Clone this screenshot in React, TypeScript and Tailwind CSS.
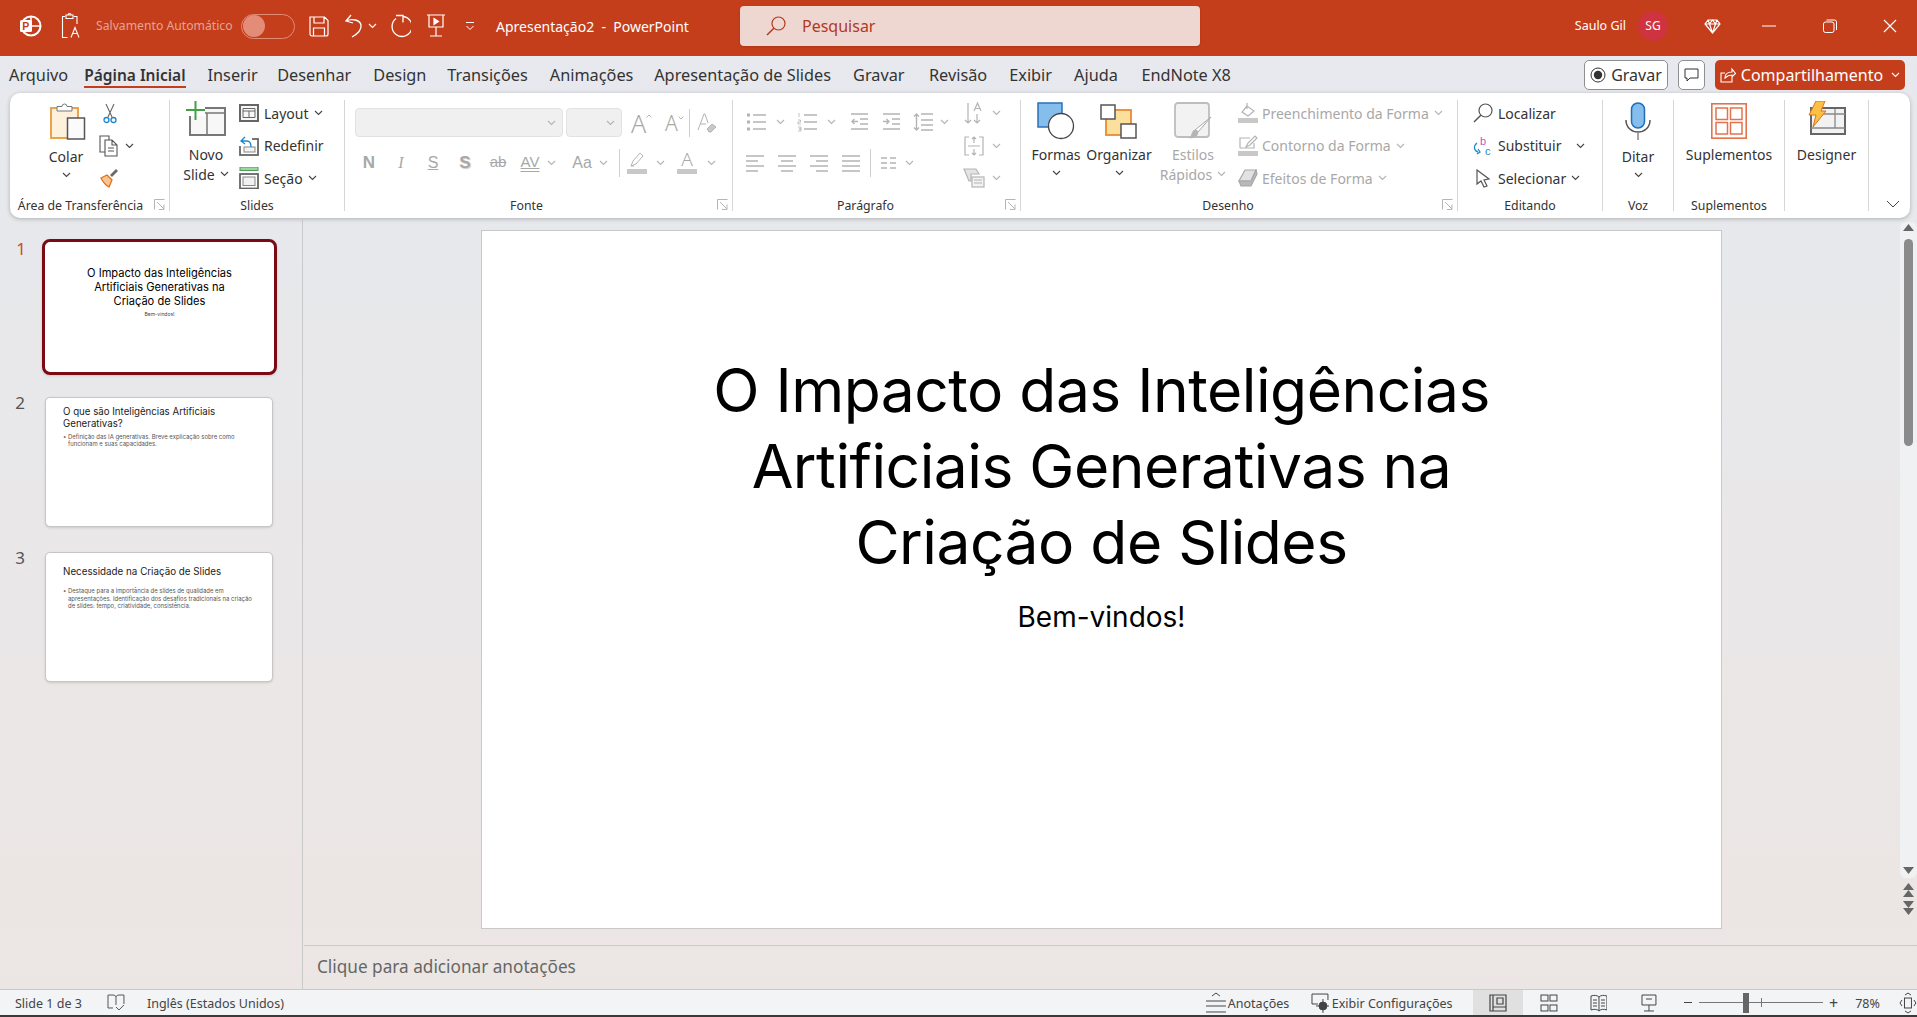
import { type ReactNode } from "react";

const ui = "font-['Noto_Sans','Open_Sans',sans-serif]";
const OFF = "#b4b4b4";

function Chev({ c = "#444", cls = "" }: { c?: string; cls?: string }) {
  return (
    <svg width="9" height="6" viewBox="0 0 9 6" className={`shrink-0 ${cls}`}>
      <path d="M1 1l3.5 3.5L8 1" fill="none" stroke={c} strokeWidth="1.1" />
    </svg>
  );
}

function Launcher() {
  return (
    <svg width="11" height="11" viewBox="0 0 11 11" className="absolute right-[4px] top-[1px]">
      <path d="M.5 10.5V.5h10M3 3l7 7M10 5.5v5H5" fill="none" stroke="#b5b5b5" />
    </svg>
  );
}

function Group({ w, label, launcher, children, labelCls = "" }: { w: string; label?: string; launcher?: boolean; children: ReactNode; labelCls?: string }) {
  return (
    <div className={`${w} shrink-0 border-r border-[#d6d6d6] flex flex-col relative`}>
      <div className="flex-1 flex -mt-[3px] min-h-0">{children}</div>
      <div className={`h-[14px] -mb-[2px] relative flex items-center justify-center text-[12.3px] leading-none text-[#333] ${labelCls}`}>
        {label}
      </div>
      {launcher && <div className="absolute bottom-0 right-0 w-[20px] h-[13px]"><Launcher /></div>}
    </div>
  );
}

function Big({ w, icon, lines, chev = true, off = false, cls = "", drop = false }: { w: string; icon: ReactNode; lines: string[]; chev?: boolean; off?: boolean; cls?: string; drop?: boolean }) {
  const color = off ? "text-[#a8a8a8]" : "text-[#333]";
  const single = lines.length === 1;
  return (
    <div className={`${w} ${cls} shrink-0 flex flex-col items-center pt-[3px]`}>
      <div className={`h-[42px] flex items-center justify-center ${drop ? "mb-[4px]" : "mb-[2px]"}`}>{icon}</div>
      {lines.map((l, i) => (
        <div key={l} className={`h-[20px] flex items-center gap-[5px] text-[14px] whitespace-nowrap ${color}`}>
          {l}
          {chev && !single && i === lines.length - 1 && <Chev c={off ? OFF : "#444"} />}
        </div>
      ))}
      {chev && single && <div className="h-[16px] mt-[1px] flex items-center"><Chev /></div>}
    </div>
  );
}

function Small({ icon, label, chev = false, off = false, gap = "gap-[5px]", chevCls = "" }: { icon: ReactNode; label: string; chev?: boolean; off?: boolean; gap?: string; chevCls?: string }) {
  return (
    <div className={`h-8 flex items-center ${gap} text-[14px] whitespace-nowrap ${off ? "text-[#a8a8a8]" : "text-[#333]"}`}>
      <div className="w-[20px] h-[20px] flex items-center justify-center shrink-0">{icon}</div>
      <span>{label}</span>
      {chev && <Chev c={off ? OFF : "#444"} cls={chevCls} />}
    </div>
  );
}

function Rows({ cls = "", children }: { cls?: string; children: ReactNode }) {
  return <div className={`flex flex-col gap-[0.5px] ${cls}`}>{children}</div>;
}

/* icons */
const PptLogo = () => (
  <svg width="24" height="24" viewBox="0 0 24 24" fill="none">
    <circle cx="13" cy="12" r="9.5" stroke="#fff" strokeWidth="2" />
    <path d="M13 3v9h9" stroke="#fff" strokeWidth="1.5" />
    <rect x="2" y="6" width="12" height="12" rx="1.5" fill="#fff" />
    <text x="4.2" y="15.8" fontSize="10.5" fontWeight="700" fill="#c43e1c" fontFamily="Liberation Sans, sans-serif">P</text>
  </svg>
);
const AccessIcon = () => (
  <svg width="20" height="28" viewBox="0 0 20 28" fill="none" stroke="#fff" strokeWidth="1.1">
    <path d="M4 4.5H1.5v21h5M13 4.5h3V12M5 3h7v3.500H5zM7 3a1.500 1.500 0 0 1 3 0" />
    <path d="M10 25.500l4-10 4 10M11.500 21.500h5" />
  </svg>
);
const SaveIcon = () => (
  <svg width="20" height="21" viewBox="0 0 20 21" fill="none" stroke="#fff" strokeWidth="1.2">
    <path d="M1 1h14.500L19 4.500V18a2 2 0 0 1-2 2H3a2 2 0 0 1-2-2zM5 1v6h10V1M4.500 20v-8h11v8" />
  </svg>
);
const UndoIcon = () => (
  <svg width="20" height="24" viewBox="0 0 20 24" fill="none" stroke="#fff" strokeWidth="1.3">
    <path d="M7 1L2 7l7 2M2 7c6-3 14-1 15 4 .6 4-2 8-9 12" />
  </svg>
);
const RedoIcon = () => (
  <svg width="21" height="24" viewBox="0 0 21 24" fill="none" stroke="#fff" strokeWidth="1.3">
    <path d="M6 1.500h7v7" />
    <path d="M13 2.500A10 10 0 1 1 6 4.500" />
  </svg>
);
const PresentIcon = () => (
  <svg width="20" height="24" viewBox="0 0 20 24" fill="none" stroke="#fff" strokeWidth="1.2">
    <path d="M1 1h18M3 1v12h14V1M10 13v9M4 22h12" />
    <path d="M8 4.500l4.500 3-4.500 3z" fill="#fff" />
  </svg>
);
const Customize = () => (
  <svg width="10" height="9" viewBox="0 0 10 9" fill="none" stroke="#fff">
    <path d="M1 .5h8M1.500 4L5 7.500 8.500 4" />
  </svg>
);
const SearchGlass = ({ c = "#b03a1f", s = 20 }: { c?: string; s?: number }) => (
  <svg width={s} height={s} viewBox="0 0 20 20" fill="none" stroke={c} strokeWidth="1.2">
    <circle cx="12.500" cy="7.500" r="6.500" />
    <path d="M7.800 12.200L1 19" strokeWidth="1.500" />
  </svg>
);
const Diamond = () => (
  <svg width="17" height="15" viewBox="0 0 17 15" fill="none" stroke="#fff" strokeWidth="1.2">
    <path d="M4 1h9l3 4-7.500 9L1 5zM1 5h15M5.500 5l3 9 3-9M4 1l1.500 4 3-4 3 4L13 1" />
  </svg>
);
const RecIcon = () => (
  <svg width="16" height="16" viewBox="0 0 16 16">
    <circle cx="8" cy="8" r="7" fill="none" stroke="#333" />
    <circle cx="8" cy="8" r="4.200" fill="#333" />
  </svg>
);
const CommentIcon = () => (
  <svg width="15" height="14" viewBox="0 0 15 14" fill="none" stroke="#333">
    <path d="M1 1h13v9H6l-3 3v-3H1z" />
  </svg>
);
const ShareIcon = () => (
  <svg width="16" height="16" viewBox="0 0 16 16" fill="none" stroke="#fff" strokeWidth="1.100">
    <path d="M5 6H1v9h11v-5M5 11c0-4 3-6 7-6V2l3.500 4.500L12 10V8c-3 0-5 1-7 3z" />
  </svg>
);
const PasteIcon = () => (
  <svg width="36" height="37" viewBox="0 0 36 37">
    <rect x="1" y="5" width="27" height="30" fill="#fdf1dc" stroke="#e89a3c" strokeWidth="1.800" />
    <path d="M7 7V3.500h5a2.500 2.500 0 0 1 5 0h5V8H7z" fill="#fff" stroke="#777" />
    <rect x="17.500" y="15" width="17" height="21" fill="#fbfbfb" stroke="#555" strokeWidth="1.500" />
  </svg>
);
const ScissorsIcon = () => (
  <svg width="14" height="21" viewBox="0 0 14 21" fill="none">
    <path d="M3 1l6 13M11 1L5 14" stroke="#666" strokeWidth="1.100" />
    <circle cx="3.500" cy="17" r="2.500" stroke="#1a86d0" strokeWidth="1.300" />
    <circle cx="10.500" cy="17" r="2.500" stroke="#1a86d0" strokeWidth="1.300" />
  </svg>
);
const CopyIcon = () => (
  <svg width="20" height="22" viewBox="0 0 20 22" fill="#fff" stroke="#555" strokeWidth="1.100">
    <path d="M1 1h9v16H1z" />
    <path d="M6 5h7l5 5v11H6zM13 5v5h5M9 13h6M9 16h6" />
  </svg>
);
const BrushIcon = () => (
  <svg width="20" height="20" viewBox="0 0 20 20">
    <path d="M2 10l6-3 5 5-3 7c-2-1-6-5-8-9z" fill="#f9c48e" stroke="#e0701c" strokeWidth="1.300" />
    <path d="M11 7l6-6 2 2-6 6z" fill="#6a6a6a" />
  </svg>
);
const NewSlideIcon = () => (
  <svg width="40" height="36" viewBox="0 0 40 36" fill="none">
    <rect x="4" y="7" width="35" height="27" fill="#f7f7f7" stroke="#777" strokeWidth="2" />
    <path d="M4 12h34M21 12v21" stroke="#777" strokeWidth="1.500" />
    <rect x="0" y="2" width="19" height="13" fill="#fff" />
    <path d="M9.500 0v19M0 9h19" stroke="#43a047" strokeWidth="2" />
  </svg>
);
const LayoutIcon = () => (
  <svg width="20" height="18" viewBox="0 0 20 18" fill="none" stroke="#666">
    <rect x="1" y="1" width="18" height="16" strokeWidth="2" fill="#f7f7f7" />
    <path d="M4 4.500h12v9H4zM4 7h12M10 7v6.500" />
  </svg>
);
const ResetIcon = () => (
  <svg width="20" height="20" viewBox="0 0 20 20" fill="none">
    <rect x="1" y="3" width="18" height="16" stroke="#666" strokeWidth="1.800" />
    <rect x="5" y="11" width="11" height="5" fill="#f2f2f2" stroke="#888" />
    <rect x="0" y="0" width="13" height="10" fill="#fff" />
    <path d="M6 1L2 5l4 3M2 5h6c3 0 4 2 4 6" stroke="#1a86d0" strokeWidth="1.300" />
  </svg>
);
const SectionIcon = () => (
  <svg width="20" height="22" viewBox="0 0 20 22" fill="none">
    <rect x="1" y="0" width="18" height="3.500" fill="#9fd5a3" stroke="#4aa05a" />
    <rect x="1" y="7" width="18" height="14.500" stroke="#666" strokeWidth="1.800" />
    <rect x="4" y="10" width="12" height="8.500" fill="#f2f2f2" stroke="#888" />
  </svg>
);
const BulletsIcon = () => (
  <svg width="21" height="18" viewBox="0 0 21 18" fill="none" stroke={OFF}>
    <path d="M7 2h13M7 9h13M7 16h13" strokeWidth="1.300" />
    <path d="M1 2h3M1 9h3M1 16h3" strokeWidth="3" />
  </svg>
);
const NumbersIcon = () => (
  <svg width="21" height="20" viewBox="0 0 21 20" fill="none" stroke={OFF}>
    <path d="M7 3h13M7 10h13M7 17h13" strokeWidth="1.300" />
    <path d="M2 1v4M1 8h2.500v2H1v2h3M1 15h3v2H2h2v2H1" strokeWidth=".8" />
  </svg>
);
const IndentIcon = ({ inc = false }: { inc?: boolean }) => (
  <svg width="19" height="18" viewBox="0 0 19 18" fill="none" stroke={OFF} strokeWidth="1.400">
    <path d="M1 1h17M10 6h8M10 11h8M1 16h17" />
    <path d={inc ? "M1 8.500h6M4.500 6l2.500 2.500L4.500 11" : "M8 8.500H2M4.500 6L2 8.500 4.500 11"} />
  </svg>
);
const SpacingIcon = () => (
  <svg width="21" height="20" viewBox="0 0 21 20" fill="none" stroke={OFF} strokeWidth="1.400">
    <path d="M8 2h12M8 8h12M8 13h12M8 18h12M3.500 2v16M1 4.500L3.500 2 6 4.500M1 15.500L3.500 18 6 15.500" />
  </svg>
);
const AlignIcon = ({ m }: { m: "l" | "c" | "r" | "j" }) => {
  const d = {
    l: "M1 1h18M1 6h12M1 11h18M1 16h12",
    c: "M1 1h18M4 6h12M1 11h18M4 16h12",
    r: "M1 1h18M7 6h12M1 11h18M7 16h12",
    j: "M1 1h18M1 6h18M1 11h18M1 16h18",
  }[m];
  return (
    <svg width="20" height="17" viewBox="0 0 20 17" fill="none" stroke={OFF} strokeWidth="1.400">
      <path d={d} />
    </svg>
  );
};
const ColumnsIcon = () => (
  <svg width="17" height="12" viewBox="0 0 17 12" fill="none" stroke={OFF} strokeWidth="1.300">
    <path d="M1 1h6M1 6h6M1 11h6M10 1h6M10 6h6M10 11h6" />
  </svg>
);
const TextDirIcon = () => (
  <svg width="20" height="24" viewBox="0 0 20 24" fill="none" stroke={OFF} strokeWidth="1.200">
    <path d="M4 2v20M1 19l3 3 3-3M13 13v9M10 19l3 3 3-3M10 10l3.500-8L17 10M11 7.500h5" />
  </svg>
);
const AlignBoxIcon = () => (
  <svg width="20" height="22" viewBox="0 0 20 22" fill="none" stroke={OFF} strokeWidth="1.200">
    <path d="M5 2H1v18h4M15 2h4v18h-4M4 11h12M10 2v6M8 4l2-2 2 2M10 14v6M8 18l2 2 2-2" />
  </svg>
);
const SmartIcon = () => (
  <svg width="22" height="20" viewBox="0 0 22 20" fill="none" stroke={OFF} strokeWidth="1.200">
    <path d="M1 1h12l3 5H8v7H6z" fill="#e4e4e4" />
    <rect x="9" y="9" width="12" height="10" fill="#f2f2f2" />
    <path d="M11 12h8M11 15h8" />
  </svg>
);
const FillIcon = () => (
  <svg width="20" height="22" viewBox="0 0 20 22" fill="none" stroke={OFF} strokeWidth="1.200">
    <path d="M9 4l-5 6 6 4 6-5zM9 1v6" />
    <rect x="0" y="16" width="20" height="5" fill="#c8c8c8" stroke="none" />
  </svg>
);
const LineIcon = () => (
  <svg width="20" height="22" viewBox="0 0 20 22" fill="none" stroke={OFF} strokeWidth="1.200">
    <path d="M2 13V3h10M16 8v5H2M8 12l2-4 7-7 2 2-7 7z" />
    <rect x="0" y="16" width="20" height="5" fill="#c8c8c8" stroke="none" />
  </svg>
);
const EffectIcon = () => (
  <svg width="20" height="18" viewBox="0 0 20 18" stroke="#a8a8a8" strokeWidth="1.200">
    <path d="M7 1h11L13 12H1z" fill="#e2e2e2" />
    <path d="M1 12l2 5h10l6-12-1-4-5 11z" fill="#b8b8b8" />
  </svg>
);
const ShapesIcon = () => (
  <svg width="38" height="38" viewBox="0 0 38 38">
    <rect x="1" y="1" width="24" height="24" fill="#85bdec" stroke="#2a72b8" strokeWidth="1.500" />
    <circle cx="24" cy="24" r="12.500" fill="#fff" stroke="#444" strokeWidth="1.300" />
  </svg>
);
const ArrangeIcon = () => (
  <svg width="38" height="35" viewBox="0 0 38 35">
    <rect x="6" y="6" width="25" height="25" fill="#fbdf9c" stroke="#ea8a2f" strokeWidth="1.800" />
    <rect x="1" y="1" width="14" height="14" fill="#fff" stroke="#555" strokeWidth="1.500" />
    <rect x="21" y="20" width="15" height="14" fill="#fff" stroke="#555" strokeWidth="1.500" />
  </svg>
);
const StylesIcon = () => (
  <svg width="38" height="38" viewBox="0 0 38 38">
    <rect x="1" y="1" width="34" height="34" rx="3" fill="#f2f2f2" stroke="#bdbdbd" strokeWidth="1.800" />
    <path d="M37 15L24 30l-3-2z" fill="#fff" stroke="#a8a8a8" />
    <path d="M20 28c3-1 5 1 4 4s-6 5-9 4c3-2 2-6 5-8z" fill="#b5b5b5" />
  </svg>
);
const ReplaceIcon = () => (
  <svg width="20" height="20" viewBox="0 0 20 20" fill="none">
    <path d="M4 7C0 10 1 15 5 16M5 13l2 3-3 2" stroke="#1a8ad0" strokeWidth="1.300" />
    <text x="7" y="9" fontSize="11" fill="#b45dbf" fontFamily="Liberation Sans, sans-serif">b</text>
    <text x="12" y="19" fontSize="11" fill="#1a8ad0" fontFamily="Liberation Sans, sans-serif">c</text>
  </svg>
);
const CursorIcon = () => (
  <svg width="16" height="19" viewBox="0 0 16 19" fill="#fff" stroke="#555" strokeWidth="1.200">
    <path d="M2 1v14l4-3 3 6 3-1-3-6 5-1z" />
  </svg>
);
const MicIcon = () => (
  <svg width="26" height="38" viewBox="0 0 26 38" fill="none">
    <rect x="6.500" y="1" width="13" height="25" rx="6.500" fill="#85bdec" stroke="#1f6fb8" strokeWidth="1.500" />
    <path d="M1 18c0 16 24 16 24 0" stroke="#555" strokeWidth="1.500" />
    <path d="M13 31v7" stroke="#888" strokeWidth="1.500" />
  </svg>
);
const AddinsIcon = () => (
  <svg width="36" height="36" viewBox="0 0 36 36" fill="none" stroke="#e2734d" strokeWidth="1.500">
    <rect x=".8" y=".8" width="34.400" height="34.400" strokeWidth="1.600" />
    <rect x="5" y="5" width="11.500" height="11.500" />
    <rect x="19.500" y="5" width="11.500" height="11.500" />
    <rect x="5" y="19.500" width="11.500" height="11.500" />
    <rect x="19.500" y="19.500" width="11.500" height="11.500" />
  </svg>
);
const DesignerIcon = () => (
  <svg width="38" height="36" viewBox="0 0 38 36">
    <rect x="3" y="7" width="34" height="26" fill="#f2f2f2" stroke="#666" strokeWidth="2" />
    <path d="M3 27h34M27 8v19M14 13h23" stroke="#888" strokeWidth="1.300" fill="none" />
    <path d="M8 0h9l-4 10h5L5 26l3-12H1z" fill="#fbc044" stroke="#e0701c" />
  </svg>
);

function Cell({ w = "w-[24px]", ml = "", children }: { w?: string; ml?: string; children: ReactNode }) {
  return <div className={`${w} ${ml} shrink-0 flex items-center justify-center h-full`}>{children}</div>;
}

const tabs = [
  { t: "Arquivo", c: "" },
  { t: "Página Inicial", c: "font-semibold text-[15.5px] border-b-2 border-[#c43e1c] -ml-[6px]" },
  { t: "Inserir", c: "" },
  { t: "Desenhar", c: "-ml-[2.5px]" },
  { t: "Design", c: "" },
  { t: "Transições", c: "-ml-[1.2px]" },
  { t: "Animações", c: "" },
  { t: "Apresentação de Slides", c: "-ml-[1.2px]" },
  { t: "Gravar", c: "" },
  { t: "Revisão", c: "ml-[2.4px]" },
  { t: "Exibir", c: "" },
  { t: "Ajuda", c: "" },
  { t: "EndNote X8", c: "ml-[1.5px]" },
];

function TitleBar() {
  return (
    <div className="h-[56px] shrink-0 bg-[#c43e1c] flex items-center pb-[4px] text-white">
      <div className="ml-[18px] w-[24px] flex justify-center"><PptLogo /></div>
      <div className="ml-[19px] w-[20px]"><AccessIcon /></div>
      <span className="ml-[15px] w-[141px] text-[12.2px] text-[#e4a493] whitespace-nowrap">Salvamento Automático</span>
      <div className="ml-[4px] w-[54px] h-[25px] rounded-full border border-[#e08b74] flex items-center pl-[1px]">
        <div className="w-[22px] h-[22px] rounded-full bg-[#e38d78]" />
      </div>
      <div className="ml-[14px] w-[20px]"><SaveIcon /></div>
      <div className="ml-[15px]"><UndoIcon /></div>
      <Chev c="#fff" cls="ml-[4px]" />
      <div className="ml-[13px]"><RedoIcon /></div>
      <div className="ml-[15px]"><PresentIcon /></div>
      <div className="ml-[19px]"><Customize /></div>
      <span className="ml-[21px] w-[244px] text-[14px] whitespace-pre">Apresentação2  -  PowerPoint</span>
      <div className="h-[40px] w-[460px] bg-[#eed7d1] rounded-[4px] flex items-center pl-[26px] gap-[8px] text-[16px] text-[#b03a1f] shadow-sm">
        <SearchGlass />
        <span className="ml-[8px]">Pesquisar</span>
      </div>
      <span className="ml-auto text-[12.5px] whitespace-nowrap">Saulo Gil</span>
      <div className="ml-[12px] w-[30px] h-[30px] rounded-full bg-[#cf3340] flex items-center justify-center text-[12px]">SG</div>
      <div className="ml-[36px]"><Diamond /></div>
      <svg width="14" height="2" viewBox="0 0 14 2" className="ml-[41px]"><path d="M0 1h14" stroke="#fff" /></svg>
      <svg width="14" height="14" viewBox="0 0 14 14" fill="none" stroke="#fff" className="ml-[47px]">
        <rect x=".5" y="3" width="10.500" height="10.500" rx="2" />
        <path d="M3.500 1h8a2 2 0 0 1 2 2v8" />
      </svg>
      <svg width="14" height="14" viewBox="0 0 14 14" stroke="#fff" strokeWidth="1.200" className="ml-[46px] mr-[20px]">
        <path d="M1 1l12 12M13 1L1 13" />
      </svg>
    </div>
  );
}

function TabRow() {
  return (
    <div className="h-[37px] shrink-0 flex items-start justify-between">
      <div className="flex gap-[22px] pl-[9px] text-[16.3px] text-[#333] pt-[8px]">
        {tabs.map(({ t, c }) => (
          <div key={t} className={`relative h-[24px] leading-[22px] whitespace-nowrap ${c}`}>
            {t}
          </div>
        ))}
      </div>
      <div className="flex items-center gap-[10px] pt-[4px] pr-[12px]">
        <div className="h-[30px] w-[84px] rounded-[5px] border border-[#8f8f8f] bg-white flex items-center justify-center gap-[5px] text-[16px] text-[#333]">
          <RecIcon /> Gravar
        </div>
        <div className="h-[30px] w-[27px] rounded-[5px] border border-[#8f8f8f] bg-white flex items-center justify-center">
          <CommentIcon />
        </div>
        <div className="h-[30px] w-[190px] rounded-[5px] bg-[#c43e1c] flex items-center justify-center gap-[5px] text-[16px] text-white whitespace-nowrap">
          <ShareIcon /> Compartilhamento <Chev c="#fff" cls="ml-[3px]" />
        </div>
      </div>
    </div>
  );
}

function Ribbon() {
  return (
    <div className="h-[125px] shrink-0 ml-[10px] mr-[7px] bg-white rounded-[10px] shadow-[0_1px_4px_rgba(0,0,0,0.25)] flex py-[7px]">
      <Group w="w-[160px]" label="Área de Transferência" launcher labelCls="pr-[18px]">
        <Big w="w-[48px]" cls="ml-[32px]" drop icon={<div className="ml-[4px]"><PasteIcon /></div>} lines={["Colar"]} />
        <Rows cls="ml-[9px]">
          <div className="h-8 flex items-center pl-[4px]"><ScissorsIcon /></div>
          <div className="h-8 flex items-center gap-[6px]"><CopyIcon /><Chev /></div>
          <div className="h-8 flex items-center"><BrushIcon /></div>
        </Rows>
      </Group>

      <Group w="w-[175px]" label="Slides">
        <Big w="w-[52px]" cls="ml-[10px]" icon={<div className="-mt-[4px]"><NewSlideIcon /></div>} lines={["Novo", "Slide"]} />
        <Rows cls="ml-[7px]">
          <Small icon={<LayoutIcon />} label="Layout" chev />
          <Small icon={<ResetIcon />} label="Redefinir" />
          <Small icon={<SectionIcon />} label="Seção" chev />
        </Rows>
      </Group>

      <Group w="w-[388px]" label="Fonte" launcher labelCls="pr-[24px]">
        <div className="flex flex-col text-[#a8a8a8]">
          <div className="mt-[11px] h-[29px] flex items-center pl-[10px]">
            <div className="w-[208px] h-full rounded-[4px] bg-[#f0f0f0] border border-[#e2e2e2] flex items-center justify-end pr-[6px]"><Chev c={OFF} /></div>
            <div className="ml-[3px] w-[56px] h-full rounded-[4px] bg-[#f0f0f0] border border-[#e2e2e2] flex items-center justify-end pr-[6px]"><Chev c={OFF} /></div>
            <div className="ml-[9px] w-[20px] flex items-start font-light">
              <span className="text-[25px] leading-[26px]">A</span>
              <svg width="6" height="4" viewBox="0 0 6 4" fill="none" stroke={OFF} className="mt-[4px] shrink-0"><path d="M.5 3.500L3 1l2.500 2.500" /></svg>
            </div>
            <div className="ml-[14px] w-[20px] flex items-start font-light">
              <span className="text-[21px] leading-[24px]">A</span>
              <svg width="6" height="4" viewBox="0 0 6 4" fill="none" stroke={OFF} className="mt-[5px] shrink-0"><path d="M.5.500L3 3l2.500-2.500" /></svg>
            </div>
            <div className="ml-[4px] w-px h-[28px] bg-[#d0d0d0]" />
            <svg width="20" height="22" viewBox="0 0 20 22" fill="none" stroke={OFF} className="ml-[7px]">
              <path d="M1 18L7 2h1l3 9M3 12h6" />
              <path d="M10 17l5-5 4 3-5 5h-2z" fill="#c8c8c8" />
            </svg>
          </div>
          <div className="mt-[11px] h-[29px] flex items-center pl-[8px] font-['Liberation_Sans']">
            <Cell w="w-[32px]"><span className="text-[17px] font-bold">N</span></Cell>
            <Cell w="w-[32px]"><span className="text-[16px] italic font-['Liberation_Serif']">I</span></Cell>
            <Cell w="w-[32px]"><span className="text-[16px] underline">S</span></Cell>
            <Cell w="w-[32px]"><span className="text-[17px] font-bold [text-shadow:1px_1px_1px_#ccc]">S</span></Cell>
            <Cell w="w-[32px]" ml="ml-px"><span className="text-[15px] line-through">ab</span></Cell>
            <Cell w="w-[32px]"><span className="text-[15px] underline decoration-double">AV</span></Cell>
            <Cell w="w-[10px]"><Chev c={OFF} /></Cell>
            <Cell w="w-[32px]" ml="ml-[10px]"><span className="text-[16px]">Aa</span></Cell>
            <Cell w="w-[10px]"><Chev c={OFF} /></Cell>
            <div className="ml-[11px] w-px h-[28px] bg-[#d0d0d0]" />
            <Cell w="w-[32px]" ml="ml-px">
              <svg width="20" height="22" viewBox="0 0 20 22" fill="none" stroke={OFF}>
                <path d="M4 14l2-5 7-8 3 3-7 8zM4 14h3" />
                <rect x="0" y="17" width="20" height="5" fill="#c8c8c8" stroke="none" />
              </svg>
            </Cell>
            <Cell w="w-[10px]" ml="ml-[2px]"><Chev c={OFF} /></Cell>
            <Cell w="w-[32px]" ml="ml-[6px]">
              <div className="flex flex-col items-center w-[20px] font-['Noto_Sans'] font-light">
                <span className="text-[19px] leading-[17px]">A</span>
                <div className="w-full h-[5px] bg-[#c8c8c8] mt-[1px]" />
              </div>
            </Cell>
            <Cell w="w-[10px]" ml="ml-[3px]"><Chev c={OFF} /></Cell>
          </div>
        </div>
      </Group>

      <Group w="w-[288px]" label="Parágrafo" launcher labelCls="pr-[22px]">
        <div className="w-[229px] shrink-0 flex flex-col">
          <div className="mt-[10px] h-[30px] flex items-center">
            <Cell ml="ml-[11px]"><BulletsIcon /></Cell>
            <Cell w="w-[10px]" ml="ml-[7px]"><Chev c={OFF} /></Cell>
            <Cell ml="ml-[10px]"><NumbersIcon /></Cell>
            <Cell w="w-[10px]" ml="ml-[7px]"><Chev c={OFF} /></Cell>
            <Cell ml="ml-[11px]"><IndentIcon /></Cell>
            <Cell ml="ml-[8px]"><IndentIcon inc /></Cell>
            <Cell ml="ml-[8px]"><SpacingIcon /></Cell>
            <Cell w="w-[10px]" ml="ml-[4px]"><Chev c={OFF} /></Cell>
          </div>
          <div className="mt-[11px] h-[30px] flex items-center">
            <Cell ml="ml-[10px]"><AlignIcon m="l" /></Cell>
            <Cell ml="ml-[8px]"><AlignIcon m="c" /></Cell>
            <Cell ml="ml-[8px]"><AlignIcon m="r" /></Cell>
            <Cell ml="ml-[8px]"><AlignIcon m="j" /></Cell>
            <div className="ml-[7px] w-px h-[28px] bg-[#d0d0d0]" />
            <Cell ml="ml-[5px]"><ColumnsIcon /></Cell>
            <Cell w="w-[10px]" ml="ml-[4px]"><Chev c={OFF} /></Cell>
          </div>
        </div>
        <Rows>
          {[<TextDirIcon key="a" />, <AlignBoxIcon key="b" />, <SmartIcon key="c" />].map((ic, i) => (
            <div key={i} className="h-8 flex items-center">
              <Cell>{ic}</Cell>
              <Cell w="w-[10px]" ml="ml-[5px]"><Chev c={OFF} /></Cell>
            </div>
          ))}
        </Rows>
      </Group>

      <Group w="w-[437px]" label="Desenho" launcher labelCls="pr-[22px]">
        <Big w="w-[70px]" icon={<ShapesIcon />} lines={["Formas"]} />
        <Big w="w-[56px]" icon={<ArrangeIcon />} lines={["Organizar"]} />
        <Big w="w-[80px]" cls="ml-[6px]" icon={<StylesIcon />} lines={["Estilos", "Rápidos"]} off />
        <Rows cls="ml-[5px]">
          <Small off icon={<FillIcon />} label="Preenchimento da Forma" chev gap="gap-[4px]" chevCls="ml-px" />
          <Small off icon={<LineIcon />} label="Contorno da Forma" chev gap="gap-[4px]" chevCls="ml-px" />
          <Small off icon={<EffectIcon />} label="Efeitos de Forma" chev gap="gap-[4px]" chevCls="ml-px" />
        </Rows>
      </Group>

      <Group w="w-[145px]" label="Editando">
        <Rows cls="ml-[15px]">
          <Small icon={<SearchGlass c="#555" />} label="Localizar" />
          <Small icon={<ReplaceIcon />} label="Substituir" chev chevCls="ml-[10px]" />
          <Small icon={<CursorIcon />} label="Selecionar" chev />
        </Rows>
      </Group>

      <Group w="w-[71px]" label="Voz">
        <Big w="w-full" drop icon={<MicIcon />} lines={["Ditar"]} />
      </Group>

      <Group w="w-[111px]" label="Suplementos">
        <Big w="w-full" icon={<AddinsIcon />} lines={["Suplementos"]} chev={false} />
      </Group>

      <Group w="w-[84px]">
        <Big w="w-full" icon={<div className="-mt-[4px]"><DesignerIcon /></div>} lines={["Designer"]} chev={false} />
      </Group>

      <div className="flex-1 flex items-end justify-center pb-[3px] pl-[6px]">
        <svg width="14" height="8" viewBox="0 0 14 8" fill="none" stroke="#444"><path d="M1 1l6 6 6-6" /></svg>
      </div>
    </div>
  );
}

function Sidebar() {
  return (
    <div className="w-[303px] shrink-0 border-r border-[#c9c9c9] flex flex-col pt-[21px] font-['Inter',sans-serif]">
      <div className="flex">
        <div className={`${ui} w-[42px] text-center text-[17px] leading-[18px] text-[#d24726] pt-[1px]`}>1</div>
        <div className="w-[235px] h-[136px] bg-white border-[3px] border-[#7b0a14] rounded-[8px] flex flex-col items-center pt-[24px] text-black shadow-sm">
          <div className="text-[11.1px] leading-[14px] text-center whitespace-nowrap">
            O Impacto das Inteligências<br />Artificiais Generativas na<br />Criação de Slides
          </div>
          <div className="text-[5px] leading-[7px] mt-[3px] text-[#444]">Bem-vindos!</div>
        </div>
      </div>
      <div className="flex mt-[22px]">
        <div className={`${ui} w-[45px] pr-[5px] text-center text-[17px] leading-[18px] text-[#555] -mt-[3px]`}>2</div>
        <div className="w-[228px] h-[130px] bg-white border border-[#c6c6c6] rounded-[5px] pl-[17px] pt-[8px] shadow-sm text-[#222]">
          <div className="text-[9.7px] leading-[12px] whitespace-nowrap">O que são Inteligências Artificiais<br />Generativas?</div>
          <div className="flex text-[5.95px] leading-[7px] whitespace-nowrap text-[#555] mt-[3px]">
            <span className="w-[5px]">•</span>
            <div>Definição das IA generativas. Breve explicação sobre como<br />funcionam e suas capacidades.</div>
          </div>
        </div>
      </div>
      <div className="flex mt-[25px]">
        <div className={`${ui} w-[45px] pr-[5px] text-center text-[17px] leading-[18px] text-[#555] -mt-[3px]`}>3</div>
        <div className="w-[228px] h-[130px] bg-white border border-[#c6c6c6] rounded-[5px] pl-[17px] pt-[13px] shadow-sm text-[#222]">
          <div className="text-[9.8px] leading-[12px] whitespace-nowrap">Necessidade na Criação de Slides</div>
          <div className="flex text-[5.95px] leading-[7.5px] whitespace-nowrap text-[#555] mt-[9px]">
            <span className="w-[5px]">•</span>
            <div>Destaque para a importância de slides de qualidade em<br />apresentações. Identificação dos desafios tradicionais na criação<br />de slides: tempo, criatividade, consistência.</div>
          </div>
        </div>
      </div>
    </div>
  );
}

function Tri({ up }: { up?: boolean }) {
  return (
    <svg width="11" height="7" viewBox="0 0 11 7" fill="#666"><path d={up ? "M5.500 0L11 7H0z" : "M0 0h11L5.500 7z"} /></svg>
  );
}

function Scrollbar() {
  return (
    <div className="w-[17px] shrink-0 flex flex-col items-center pt-[4px]">
      <div className="w-full h-[656px] bg-[#f0f1f3] rounded-[6px] flex flex-col items-center pt-[2px]">
        <Tri up />
        <div className="mt-[8px] w-[9px] h-[207px] rounded-full bg-[#8b8b8b]" />
        <div className="flex-1" />
        <div className="mb-[4px]"><Tri /></div>
      </div>
      <div className="mt-[5px] flex flex-col items-center">
        <Tri up /><Tri up />
        <div className="h-[4px]" />
        <Tri /><Tri />
      </div>
    </div>
  );
}

function Editor() {
  return (
    <div className="flex-1 min-w-0 flex flex-col">
      <div className="flex-1 min-h-0 flex">
        <div className="flex-1 flex justify-center pt-[12px]">
          <div className="w-[1241px] h-[699px] bg-white border border-[#c8c8c8] flex flex-col items-center pt-[121px] font-['Inter',sans-serif] text-black">
            <div className="text-[60.5px] leading-[76px] text-center whitespace-nowrap tracking-[-0.5px]">
              O Impacto das Inteligências<br />Artificiais Generativas na<br />Criação de Slides
            </div>
            <div className="text-[28px] leading-[36px] mt-[19px]">Bem-vindos!</div>
          </div>
        </div>
        <Scrollbar />
      </div>
      <div className="h-[44px] shrink-0 border-t border-[#c9c9c9] ml-px flex items-center pl-[13px] pb-[2px] text-[17.2px] text-[#666]">
        Clique para adicionar anotações
      </div>
    </div>
  );
}

function StatusBar() {
  return (
    <div className="h-[28px] shrink-0 border-t border-[#c9c9c9] border-b-2 border-b-[#3a3a3a] bg-[#f3f4f5] flex items-center text-[12.5px] text-[#444]">
      <span className="ml-[15px] pt-[3px] w-[55px] whitespace-nowrap">Slide 1 de 3</span>
      <svg width="18" height="17" viewBox="0 0 18 17" fill="none" stroke="#555" className="ml-[37px]">
        <path d="M1 1h5c1.500 0 3 1 3 2 0-1 1.500-2 3-2h5v9M1 1v13h5M9 3v8M9 13l3 3 5-5" />
      </svg>
      <span className="ml-[22px] pt-[3px] whitespace-nowrap">Inglês (Estados Unidos)</span>
      <svg width="20" height="22" viewBox="0 0 20 22" fill="none" stroke="#444" className="ml-[922px]">
        <path d="M6 4l4-3 4 3M0 9h20M0 14h20M0 20h20" />
      </svg>
      <span className="ml-[2px] pt-[3px] w-[61px] whitespace-nowrap">Anotações</span>
      <svg width="18" height="20" viewBox="0 0 18 20" fill="none" stroke="#444" className="ml-[22px]">
        <path d="M7 11H1V1h16v6" />
        <circle cx="12" cy="13" r="4" fill="#444" />
        <path d="M12 6v14M5 13h14" />
      </svg>
      <span className="ml-[3px] pt-[3px] w-[120px] whitespace-nowrap">Exibir Configurações</span>
      <div className="ml-[21px] w-[50px] h-full bg-[#e0e0e0] flex items-center justify-center">
        <svg width="18" height="18" viewBox="0 0 18 18" fill="none" stroke="#444" strokeWidth="1.200">
          <path d="M1 1h16v16H1zM4 1v16M4 13h13M8 4h6v6H8z" />
        </svg>
      </div>
      <svg width="18" height="18" viewBox="0 0 18 18" fill="none" stroke="#444" className="ml-[17px]">
        <rect x="1" y="1" width="7" height="6" /><rect x="10" y="1" width="7" height="6" />
        <rect x="1" y="11" width="7" height="6" /><rect x="10" y="11" width="7" height="6" />
      </svg>
      <svg width="18" height="18" viewBox="0 0 18 18" fill="none" stroke="#444" className="ml-[32px]">
        <path d="M1 2c3-1 6-1 8 1 2-2 5-2 8-1v14c-3-1-6-1-8 1-2-2-5-2-8-1zM9 3v14M3 6h4M3 9h4M3 12h4M11 6h4M11 9h4M11 12h4" />
      </svg>
      <svg width="18" height="18" viewBox="0 0 18 18" fill="none" stroke="#444" className="ml-[33px]">
        <path d="M2 1h14v10H2zM9 11v6M4 17h10M6 5h6" />
      </svg>
      <div className="ml-[26px] w-[8px] h-px bg-[#444]" />
      <div className="ml-[7px] w-[124px] h-px bg-[#777] flex items-center relative">
        <div className="absolute left-[44px] w-[6px] h-[20px] bg-[#666]" />
        <div className="absolute left-[62px] w-px h-[9px] bg-[#777]" />
      </div>
      <span className="ml-[6px] text-[16px] leading-none">+</span>
      <span className="ml-[17px] pt-[3px] w-[28px] whitespace-nowrap">78%</span>
      <svg width="18" height="22" viewBox="0 0 18 22" fill="none" stroke="#444" className="ml-[16px]">
        <rect x="5.500" y="6" width="7" height="10" />
        <path d="M6 3l3-2 3 2M6 19l3 2 3-2M3 8l-2 3 2 3M15 8l2 3-2 3" />
      </svg>
    </div>
  );
}

export default function App() {
  return (
    <div className={`${ui} w-full h-screen overflow-hidden flex flex-col bg-gradient-to-b from-[#e6e9ee] to-[#ece6e3]`}>
      <TitleBar />
      <TabRow />
      <Ribbon />
      <div className="flex-1 min-h-0 flex">
        <Sidebar />
        <Editor />
      </div>
      <StatusBar />
    </div>
  );
}
